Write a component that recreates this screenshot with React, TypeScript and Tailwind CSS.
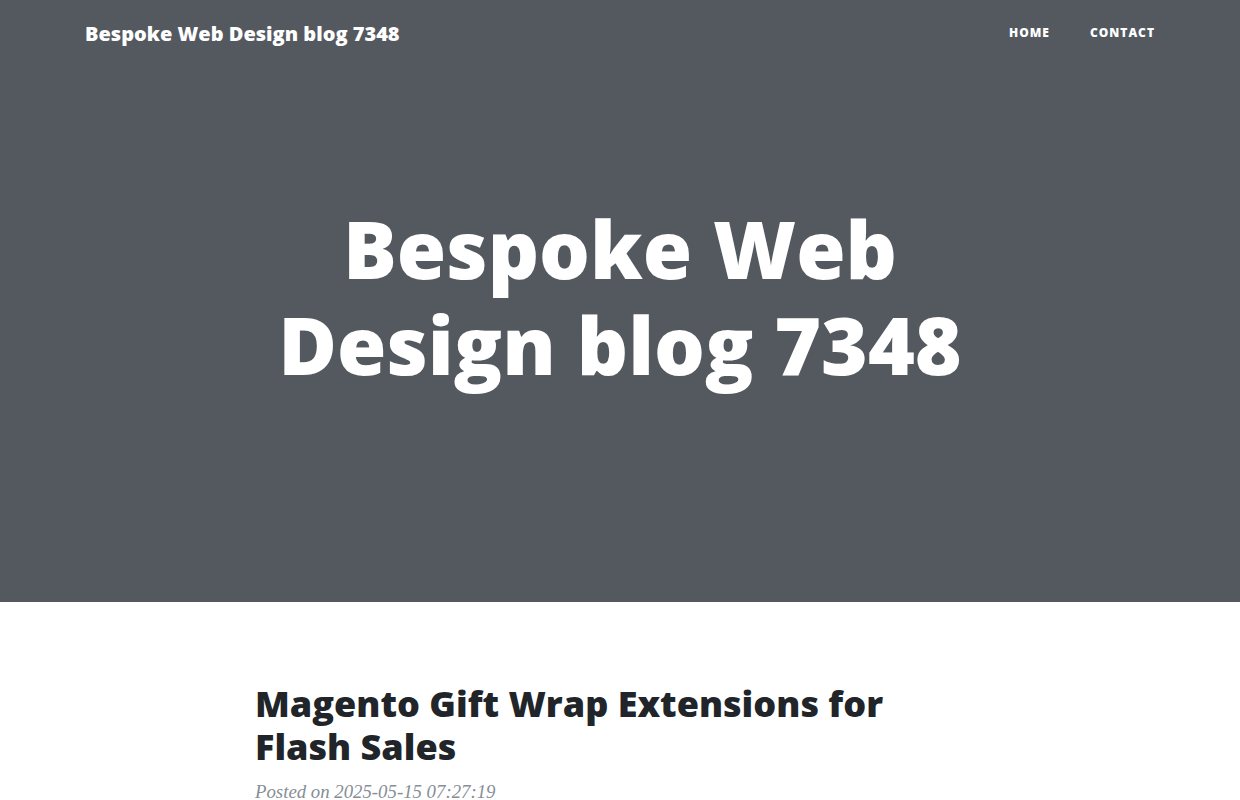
import React from "react";

const heading = { fontFamily: '"Open Sans", "Liberation Sans", sans-serif' };
const serif = { fontFamily: '"Liberation Serif", "DejaVu Serif", serif' };

function NavBar() {
  return (
    <nav className="absolute left-0 right-0 top-0 z-10" style={heading}>
      <div className="mx-auto flex h-[65px] w-[1110px] items-center justify-between pl-[20px]">
        <a href="#" className="pt-[2px] text-[20px] font-extrabold leading-[30px] text-white">
          Bespoke Web Design blog 7348
        </a>
        <ul className="flex items-center">
          <li>
            <a
              href="#"
              className="block px-5 py-[10px] text-[12px] font-extrabold uppercase leading-[18px] tracking-[1px] text-white"
            >
              Home
            </a>
          </li>
          <li>
            <a
              href="#"
              className="block px-5 py-[10px] text-[12px] font-extrabold uppercase leading-[18px] tracking-[1px] text-white"
            >
              Contact
            </a>
          </li>
        </ul>
      </div>
    </nav>
  );
}

function Masthead() {
  return (
    <header className="relative mb-[50px] bg-[#545960]">
      <div className="mx-auto w-[760px] px-[15px]">
        <div className="py-[200px] text-center text-white" style={heading}>
          <h1 className="text-[80px] font-extrabold leading-[1.2]">
            Bespoke Web Design blog 7348
          </h1>
          <span className="mt-[10px] block text-[24px] font-light leading-[1.1]"></span>
        </div>
      </div>
    </header>
  );
}

function PostPreview() {
  return (
    <div className="mx-auto w-[760px] px-[15px] pt-[30px]">
      <a href="#" className="block text-[#212529]">
        <h2 className="mb-[10px] text-[36px] font-extrabold leading-[1.2]" style={heading}>
          Magento Gift Wrap Extensions for Flash Sales
        </h2>
      </a>
      <p className="text-[18.8px] italic leading-[27px] text-[#868e96]" style={serif}>
        Posted on 2025-05-15 07:27:19
      </p>
    </div>
  );
}

export default function App() {
  return (
    <div className="relative min-h-screen bg-white text-[#212529]" style={serif}>
      <NavBar />
      <Masthead />
      <PostPreview />
    </div>
  );
}
